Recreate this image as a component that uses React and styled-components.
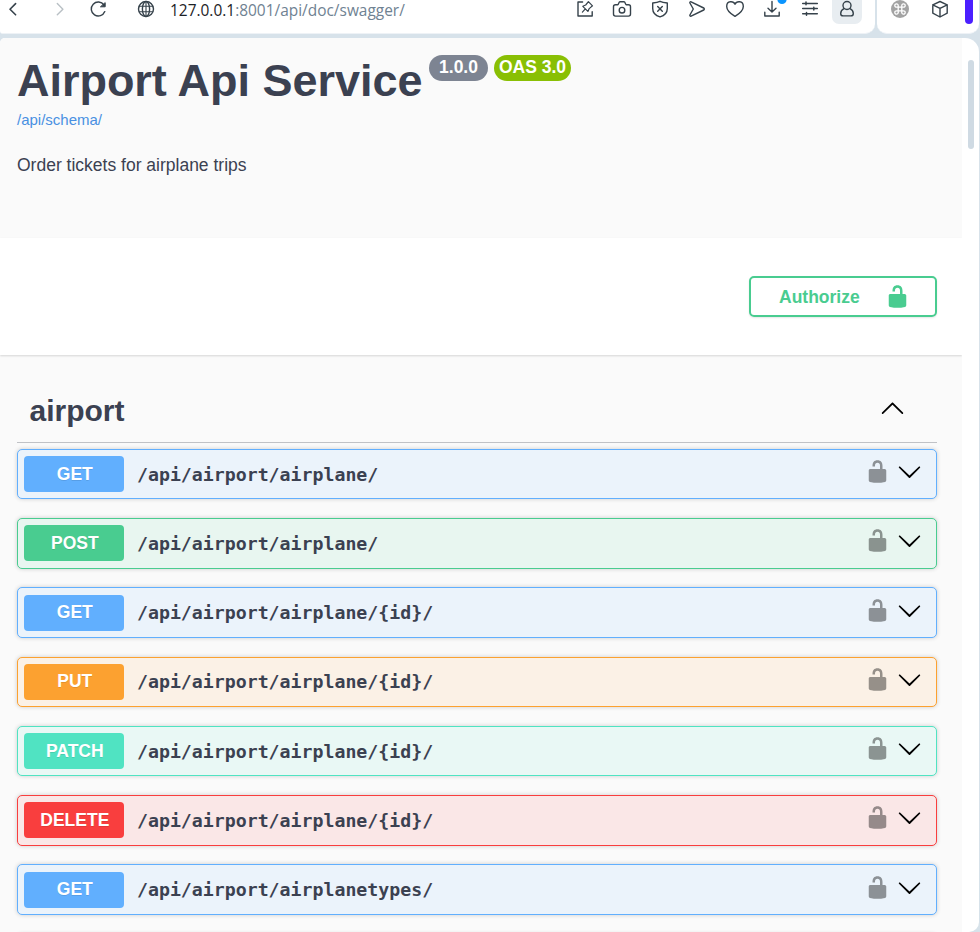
import React from "react";
import styled, { createGlobalStyle } from "styled-components";

const GlobalStyle = createGlobalStyle`
  *, *::before, *::after { box-sizing: border-box; }
  html, body { margin: 0; padding: 0; }
  body { overflow: hidden; }
  h1, h2, p { margin: 0; }
  button { font: inherit; cursor: pointer; }
`;

const Browser = styled.div`
  display: flex;
  flex-direction: column;
  width: 980px;
  height: 932px;
  overflow: hidden;
  background: #d7e2ea;
  color: #3b4151;
  font-family: "Liberation Sans", Arial, sans-serif;
`;

const ToolbarRow = styled.header`
  display: flex;
  flex: none;
  gap: 2px;
  height: 38px;
  padding: 0 1px 4px 0;
`;

const Panel = styled.div`
  display: flex;
  align-items: flex-start;
  background: #fff;
  border-bottom: 1px solid #eef2f6;
  border-radius: 0 0 10px ${(p) => (p.$side ? "10px" : "3px")};
  width: ${(p) => (p.$side ? "102px" : "875px")};
  padding-left: ${(p) => (p.$side ? "4px" : "0")};
  padding-right: ${(p) => (p.$side ? "0" : "9px")};
`;

const Slot = styled.span`
  display: flex;
  flex: none;
  align-items: center;
  justify-content: center;
  width: ${(p) => p.$w || 37.5}px;
  height: 18px;
  color: ${(p) => p.$color || "#36424b"};
`;

const Address = styled.div`
  display: flex;
  flex: 1;
  align-items: center;
  gap: 12px;
  height: 18px;
  padding-left: 32px;
  color: #36424b;
`;

const Url = styled.span`
  line-height: 20px;
  padding-top: 1px;
  font-family: "Open Sans", "Noto Sans", sans-serif;
  font-size: 15.45px;
  white-space: nowrap;
  color: #6f8292;
`;

const Host = styled.span`
  color: #1c2226;
`;

const Profile = styled.span`
  display: flex;
  flex: none;
  align-items: center;
  justify-content: center;
  width: 30px;
  height: 30px;
  border-radius: 7px;
  background: #e8edf1;
`;

const Accent = styled.span`
  width: 8px;
  height: 24px;
  margin-left: 5px;
  border-radius: 0 0 4px 4px;
  background: #4b1fff;
`;

const Viewport = styled.div`
  display: flex;
  flex: 1;
  min-height: 0;
  width: 979px;
  overflow: hidden;
  background: #fff;
  border-radius: 5px 14px 10px 0;
`;

const Page = styled.main`
  width: 962px;
  background: #fafafa;
  overflow: hidden;
`;

const ScrollTrack = styled.div`
  flex: 1;
  padding: 22px 0 0 6px;
`;

const ScrollThumb = styled.div`
  width: 6px;
  height: 89px;
  border-radius: 3px;
  background: #cfdae3;
`;

const Info = styled.section`
  height: 200px;
  padding: 17px 25px 0 17px;
`;

const TitleLine = styled.div`
  display: flex;
  align-items: flex-start;
`;

const Title = styled.h1`
  width: 405px;
  margin-right: 7px;
  font-size: 45px;
  line-height: 52px;
  letter-spacing: -0.03px;
  white-space: nowrap;
`;

const Badge = styled.span`
  width: ${(p) => p.$w}px;
  height: 26px;
  margin-right: 6px;
  border-radius: 13px;
  background: ${(p) => p.$bg};
  color: #fff;
  font-size: 17.5px;
  font-weight: 700;
  line-height: 25px;
  text-align: center;
  white-space: nowrap;
`;

const SchemaLink = styled.a`
  display: block;
  margin-top: 4px;
  font-size: 15px;
  line-height: 17px;
  color: #4990e2;
`;

const Description = styled.p`
  margin-top: 27px;
  font-size: 17.5px;
  line-height: 20px;
`;

const AuthSection = styled.section`
  display: flex;
  justify-content: flex-end;
  height: 117px;
  padding: 38px 25px 0 17px;
  background: #fff;
  box-shadow: 0 1px 2px rgba(0, 0, 0, 0.15);
`;

const AuthorizeButton = styled.button`
  display: flex;
  align-items: center;
  justify-content: space-between;
  width: 188px;
  height: 41px;
  padding: 0 25px 0 28px;
  border: 2px solid #49cc90;
  border-radius: 5px;
  background: transparent;
  box-shadow: 0 1px 2px rgba(0, 0, 0, 0.1);
  color: #49cc90;
  font-size: 17.5px;
  font-weight: 700;
`;

const ButtonLabel = styled.span`
  padding-top: 2px;
`;

const Operations = styled.section`
  padding: 25px 25px 0 17px;
`;

const TagHeader = styled.div`
  display: flex;
  align-items: flex-start;
  justify-content: space-between;
  height: 63px;
  margin-bottom: 5.9px;
  padding: 13px 32px 0 12.5px;
  border-bottom: 1px solid rgba(59, 65, 81, 0.3);
`;

const TagName = styled.h2`
  font-size: 30px;
  line-height: 36px;
`;

const TagToggle = styled.span`
  padding-top: 2px;
`;

const OperationList = styled.div`
  display: flex;
  flex-direction: column;
  gap: 18.75px;
`;

const Operation = styled.div`
  display: flex;
  flex: none;
  align-items: flex-start;
  height: 50.5px;
  padding: 6.25px 14.5px 0 6px;
  border: 1px solid ${(p) => p.$color};
  border-radius: 5px;
  background: ${(p) => p.$tint};
  box-shadow: 0 0 4px rgba(0, 0, 0, 0.19);
`;

const Method = styled.span`
  width: 100px;
  height: 36px;
  padding: 0.55px 0 0 1.6px;
  border-radius: 4px;
  background: ${(p) => p.$color};
  color: #fff;
  font-size: 17.5px;
  font-weight: 700;
  line-height: 35.1px;
  text-align: center;
  text-shadow: 0 1px 0 rgba(0, 0, 0, 0.1);
`;

const Path = styled.span`
  flex: 1;
  margin: 0.4px 0 0 13px;
  font-family: "DejaVu Sans Mono", monospace;
  font-size: 18.23px;
  font-weight: 700;
  line-height: 36px;
  white-space: nowrap;
`;

const Actions = styled.span`
  display: flex;
  gap: 7px;
  margin-top: 3px;
`;

const LockSvg = styled.svg`
  display: block;
  flex: none;
  width: 25px;
  height: 25px;
  fill: currentColor;
  opacity: ${(p) => (p.$dim ? 0.4 : 1)};
  color: ${(p) => (p.$dim ? "#000" : "inherit")};
`;

const ChevronSvg = styled.svg`
  display: block;
  flex: none;
  width: 25px;
  height: 25px;
  fill: #000;
`;

const LineSvg = styled.svg`
  display: block;
  flex: none;
  overflow: visible;
  fill: none;
  stroke: currentColor;
  stroke-width: 1.4;
  stroke-linecap: round;
  stroke-linejoin: round;
`;

const Icon = ({ children }) => (
  <LineSvg width="24" height="24" viewBox="0 0 24 24">{children}</LineSvg>
);

const Unlocked = ({ dim }) => (
  <LockSvg viewBox="0 0 20 20" $dim={dim}>
    <path d="M15.8 8H14V5.6C14 2.703 12.665 1 10 1 7.334 1 6 2.703 6 5.6V6h2v-.801C8 3.754 8.797 3 10 3c1.203 0 2 .754 2 2.199V8H4c-.553 0-1 .646-1 1.199V17c0 .549.428 1.139.951 1.307l1.197.387C5.672 18.861 6.55 19 7.1 19h5.8c.549 0 1.428-.139 1.951-.307l1.196-.387c.524-.167.953-.757.953-1.306V9.199C17 8.646 16.352 8 15.8 8z" />
  </LockSvg>
);

const Chevron = ({ up }) => (
  <ChevronSvg viewBox="0 0 20 20">
    <path
      d={
        up
          ? "M17.418 14.908c.272.268.709.268.979 0s.271-.701 0-.969l-7.908-7.83c-.27-.268-.707-.268-.979 0l-7.908 7.83c-.27.268-.27.701 0 .969s.709.268.979 0L10 7.767l7.418 7.141z"
          : "M17.418 6.109c.272-.268.709-.268.979 0s.271.701 0 .969l-7.908 7.83c-.27.268-.707.268-.979 0l-7.908-7.83c-.27-.268-.27-.701 0-.969s.709-.268.979 0L10 13.25l7.418-7.141z"
      }
    />
  </ChevronSvg>
);

const BackIcon = () => <Icon><path strokeWidth="1.6" d="M14.6 6.6 9 12.2l5.6 5.6" /></Icon>;
const ForwardIcon = () => <Icon><path d="m9.3 6.6 5.6 5.6-5.6 5.6" /></Icon>;
const ReloadIcon = () => (
  <Icon>
    <path d="M18.8 14.6A7 7 0 1 1 18 8" />
    <path d="M19.2 6v3.8h-4.4z" fill="currentColor" strokeWidth="1" />
  </Icon>
);
const GlobeIcon = () => (
  <Icon>
    <circle cx="12" cy="12" r="7.5" />
    <ellipse cx="12" cy="12" rx="3.6" ry="7.5" />
    <path d="M5.4 9.2h13.2M5.4 14.8h13.2M12 4.5v15" strokeWidth="1.1" />
  </Icon>
);
const SnapshotPinIcon = () => (
  <Icon>
    <path d="M9.6 5H5v14h14.2v-4.2" />
    <path d="m15.4 4.7 4.100 4.100-3.300 2.800-1.300 2.800-5.100-5.100 2.900-1.300zM12.300 11.900l-2.900 3.200" strokeWidth="1.2" />
  </Icon>
);
const CameraIcon = () => (
  <Icon>
    <path d="M5.5 7.7h2.3c.8 0 .9-2.9 2.2-2.9h4c1.3 0 1.4 2.9 2.2 2.9h2.3c1.2 0 2 .8 2 2v7.4c0 1.2-.8 2-2 2h-13c-1.2 0-2-.8-2-2V9.7c0-1.2.8-2 2-2z" />
    <circle cx="12" cy="13.2" r="2.8" />
  </Icon>
);
const ShieldIcon = () => (
  <Icon>
    <path d="M12 4.3c2.2 1 4.6 1.4 7.3 1.7v5.5c0 4.2-2.6 7-7.3 8.4-4.7-1.4-7.3-4.2-7.3-8.4V6c2.7-.3 5.1-.7 7.3-1.7z" />
    <path d="m9.7 9.6 4.6 4.6m0-4.6-4.6 4.6" />
  </Icon>
);
const SendIcon = () => (
  <Icon>
    <path d="M6.1 4.9c-.8-.4-1.5.3-1.2 1.1L8.3 12l-3.4 6c-.3.8.4 1.5 1.2 1.1l12.6-6.1c.8-.4.8-1.6 0-2z" />
  </Icon>
);
const HeartIcon = () => (
  <Icon>
    <path d="M12 7.2C10.6 4 3.7 3.3 3.7 9.4c0 4 4 7.3 8.3 10 4.3-2.7 8.3-6 8.3-10C20.3 3.3 13.4 4 12 7.2z" />
  </Icon>
);
const DownloadIcon = () => (
  <Icon>
    <path d="M12 4.5v10.2M8 11.2l4 3.7 4-3.7M4.8 15.3V19h14.4v-3.7" />
    <circle cx="22" cy="2.5" r="4.6" fill="#0a95ff" stroke="none" />
  </Icon>
);
const SlidersIcon = () => (
  <Icon>
    <path d="M4.7 6.4h14.6M4.7 11.6h14.6M4.7 16.8h14.6M8 5v2.8M15.8 10.2V13M8.5 15.4v2.8" strokeWidth="1.5" />
  </Icon>
);
const PersonIcon = () => (
  <Icon>
    <circle cx="12" cy="8.5" r="4" />
    <path d="M9 11.6c-2.2 1-3.3 2.7-3.3 4.8 0 1.5 1 2.5 2.5 2.5h7.6c1.5 0 2.5-1 2.5-2.5 0-2.1-1.1-3.8-3.3-4.8" />
  </Icon>
);
const CommandIcon = () => (
  <Icon>
    <circle cx="12" cy="12" r="9" fill="#a3a3a3" stroke="none" />
    <path
      stroke="#fff"
      strokeWidth="1.3"
      d="M10.2 10.2V8.6a1.7 1.7 0 1 0-1.7 1.6h7a1.7 1.7 0 1 0-1.7-1.6v6.8a1.7 1.7 0 1 0 1.7-1.6h-7a1.7 1.7 0 1 0 1.7 1.6z"
    />
  </Icon>
);
const CubeIcon = () => (
  <Icon>
    <path d="m12 4.500 7.200 3.300v8.400L12 20l-7.200-3.800V7.800zM4.800 7.800 12 11.300l7.200-3.500M12 11.300V20" />
  </Icon>
);

const palette = {
  GET: { color: "#61affe", tint: "#ebf3fb" },
  POST: { color: "#49cc90", tint: "#e8f6f0" },
  PUT: { color: "#fca130", tint: "#fbf1e6" },
  PATCH: { color: "#50e3c2", tint: "#e9f8f5" },
  DELETE: { color: "#f93e3e", tint: "#fae7e7" },
};

const operations = [
  ["GET", "/api/airport/airplane/"],
  ["POST", "/api/airport/airplane/"],
  ["GET", "/api/airport/airplane/{id}/"],
  ["PUT", "/api/airport/airplane/{id}/"],
  ["PATCH", "/api/airport/airplane/{id}/"],
  ["DELETE", "/api/airport/airplane/{id}/"],
  ["GET", "/api/airport/airplanetypes/"],
];

const toolbarIcons = [
  SnapshotPinIcon, CameraIcon, ShieldIcon, SendIcon, HeartIcon, DownloadIcon, SlidersIcon,
];

export default function App() {
  return (
    <Browser>
      <GlobalStyle />
      <ToolbarRow>
        <Panel>
          <Slot $w={26}><BackIcon /></Slot>
          <Slot $w={68} $color="#b9c0c5"><ForwardIcon /></Slot>
          <Slot $w={8}><ReloadIcon /></Slot>
          <Address>
            <GlobeIcon />
            <Url><Host>127.0.0.1</Host>:8001/api/doc/swagger/</Url>
          </Address>
          {toolbarIcons.map((Glyph, i) => (
            <Slot key={i}><Glyph /></Slot>
          ))}
          <Slot><Profile><PersonIcon /></Profile></Slot>
        </Panel>
        <Panel $side>
          <Slot $w={38}><CommandIcon /></Slot>
          <Slot $w={41}><CubeIcon /></Slot>
          <Accent />
        </Panel>
      </ToolbarRow>
      <Viewport>
        <Page>
          <Info>
            <TitleLine>
              <Title>Airport Api Service</Title>
              <Badge $w={59} $bg="#7d8492">1.0.0</Badge>
              <Badge $w={77} $bg="#89bf04">OAS 3.0</Badge>
            </TitleLine>
            <SchemaLink>/api/schema/</SchemaLink>
            <Description>Order tickets for airplane trips</Description>
          </Info>
          <AuthSection>
            <AuthorizeButton><ButtonLabel>Authorize</ButtonLabel><Unlocked /></AuthorizeButton>
          </AuthSection>
          <Operations>
            <TagHeader>
              <TagName>airport</TagName>
              <TagToggle><Chevron up /></TagToggle>
            </TagHeader>
            <OperationList>
              {operations.map(([method, path], i) => (
                <Operation key={i} $color={palette[method].color} $tint={palette[method].tint}>
                  <Method $color={palette[method].color}>{method}</Method>
                  <Path>{path}</Path>
                  <Actions><Unlocked dim /><Chevron /></Actions>
                </Operation>
              ))}
              <Operation $color="#49cc90" $tint="#e8f6f0" />
            </OperationList>
          </Operations>
        </Page>
        <ScrollTrack><ScrollThumb /></ScrollTrack>
      </Viewport>
    </Browser>
  );
}
